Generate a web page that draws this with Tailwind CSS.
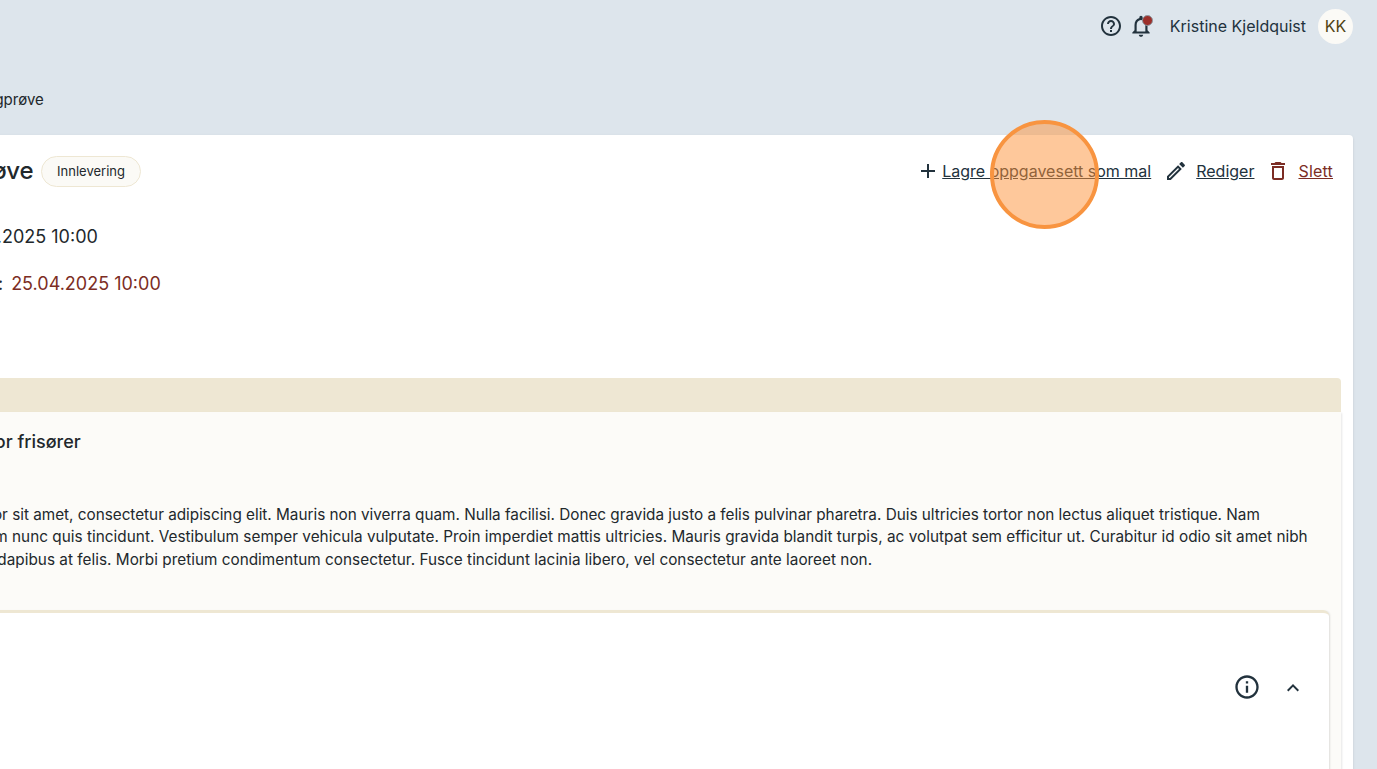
<!DOCTYPE html>
<html lang="nb">
<head>
    <meta charset="UTF-8">
    <meta name="viewport" content="width=device-width, initial-scale=1.0">
    <title>Øvingprøve</title>
    <script src="https://cdn.jsdelivr.net/npm/@tailwindcss/browser@4"></script>
</head>
<body class="relative h-[769px] overflow-hidden bg-[#dde5ec] font-['Inter',sans-serif] text-[#22282c]">
    <!-- page is scrolled sideways: the content starts left of the viewport -->
    <div class="ml-[-200px] h-[769px] w-[1577px] overflow-hidden pr-6">
        <header class="flex h-[52px] items-center justify-end">
            <svg class="h-6 w-6 fill-[#22323d]" viewBox="0 0 24 24"><path d="M11 18h2v-2h-2v2zm1-16C6.48 2 2 6.48 2 12s4.48 10 10 10 10-4.48 10-10S17.52 2 12 2zm0 18c-4.41 0-8-3.59-8-8s3.59-8 8-8 8 3.59 8 8-3.59 8-8 8zm0-14c-2.21 0-4 1.79-4 4h2c0-1.1.9-2 2-2s2 .9 2 2c0 2-3 1.75-3 5h2c0-2.25 3-2.5 3-5 0-2.21-1.79-4-4-4z"/></svg>
            <div class="relative ml-[5px] h-[26px] w-[26px]">
                <svg class="h-[26px] w-[26px] fill-[#22323d]" viewBox="0 0 24 24"><path d="M12 22c1.1 0 2-.9 2-2h-4c0 1.1.9 2 2 2zm6-6v-5c0-3.07-1.63-5.64-4.5-6.32V4c0-.83-.67-1.5-1.5-1.5s-1.5.67-1.5 1.5v.68C7.64 5.36 6 7.92 6 11v5l-2 2v1h16v-1l-2-2zm-2 1H8v-6c0-2.48 1.51-4.5 4-4.5s4 2.02 4 4.5v6z"/></svg>
                <span class="absolute right-[1px] top-[2px] h-[11px] w-[11px] rounded-full border border-[#8f99a1] bg-[#9c2f2a]"></span>
            </div>
            <span class="ml-[16px] text-base leading-6 text-[#22323d]">Kristine Kjeldquist</span>
            <span class="ml-3 flex h-[35px] w-[35px] items-center justify-center rounded-full bg-[#fbfaf6] text-base text-[#4f4213]">KK</span>
        </header>

        <nav class="mt-[36px] flex h-6 items-center justify-start pl-[162px] text-[15px] text-[#22282c]">Øvingprøve</nav>

        <main class="mt-[23px] h-[700px] rounded-t bg-white pl-5 pr-3 shadow-sm">
            <div class="flex items-start justify-between pl-[68px] pr-2 pt-5">
                <div class="flex items-center gap-[7px]">
                    <h1 class="text-2xl font-medium leading-8 text-[#22282c]">Øvingsprøve</h1>
                    <span class="rounded-full border border-[#eee7d3] bg-[#fbfaf6] px-[15.5px] py-[5px] text-[13px] leading-[19px] text-[#22282c]">Innlevering</span>
                </div>
                <div class="flex items-center pt-1 text-base leading-6">
                    <svg class="h-6 w-6 fill-[#22323d]" viewBox="0 0 24 24"><path d="M19 13h-6v6h-2v-6H5v-2h6V5h2v6h6v2z"/></svg>
                    <a class="ml-[2px] text-[#22323d] underline">Lagre oppgavesett som mal</a>
                    <svg class="ml-[13px] h-6 w-6 fill-[#22323d]" viewBox="0 0 24 24"><path d="M14.06 9.02l.92.92L5.92 19H5v-.92l9.06-9.06M17.66 3c-.25 0-.51.1-.7.29l-1.83 1.83 3.75 3.75 1.83-1.83c.39-.39.39-1.02 0-1.41l-2.34-2.34c-.2-.2-.45-.29-.71-.29zm-3.6 3.19L3 17.25V21h3.75L17.81 9.94l-3.75-3.75z"/></svg>
                    <a class="ml-2 text-[#22323d] underline">Rediger</a>
                    <svg class="ml-3 h-6 w-6 fill-[#7c2d24]" viewBox="0 0 24 24"><path d="M6 19c0 1.1.9 2 2 2h8c1.1 0 2-.9 2-2V7H6v12zM8 9h8v10H8V9zm7.5-5l-1-1h-5l-1 1H5v2h14V4z"/></svg>
                    <a class="ml-2 tracking-[0.2px] text-[#7c2d24] underline">Slett</a>
                </div>
            </div>

            <dl class="mt-[38px] text-lg leading-6">
                <div class="flex justify-start gap-[10px] pl-[41px]"><dt>Publisert:</dt><dd>01.04.2025 10:00</dd></div>
                <div class="mt-[23px] flex gap-2 pl-[41px]"><dt>Innleveringsfrist:</dt><dd class="text-[#7c2d24]">25.04.2025 10:00</dd></div>
            </dl>

            <section class="mt-[82px]">
                <div class="h-[34px] rounded-t bg-[#eee7d3]"></div>
                <div class="h-[400px] bg-[#fcfbf8] pl-4 pr-3 shadow-[2px_0_2px_-1px_rgba(0,0,0,0.1)]">
                    <h2 class="pl-[70px] pt-[18px] text-lg font-medium leading-6">Oppgave for frisører</h2>
                    <div class="mt-[49.5px] whitespace-nowrap pl-[37px] text-[15.3px] leading-[22.5px]">
                        <p class="tracking-[-0.01px]">Lorem ipsum dolor sit amet, consectetur adipiscing elit. Mauris non viverra quam. Nulla facilisi. Donec gravida justo a felis pulvinar pharetra. Duis ultricies tortor non lectus aliquet tristique. Nam</p>
                        <p class="tracking-[0.03px]">Integer fermentum nunc quis tincidunt. Vestibulum semper vehicula vulputate. Proin imperdiet mattis ultricies. Mauris gravida blandit turpis, ac volutpat sem efficitur ut. Curabitur id odio sit amet nibh</p>
                        <p class="tracking-[0.022px]">Aliquam egestas dapibus at felis. Morbi pretium condimentum consectetur. Fusce tincidunt lacinia libero, vel consectetur ante laoreet non.</p>
                    </div>
                    <div class="mt-[38.5px] h-[300px] rounded-t-md border-t-[3px] border-[#eee7d3] bg-white shadow-[2px_0_2px_-1px_rgba(0,0,0,0.12)]">
                        <div class="flex items-center justify-end pr-6 pt-[60px]">
                            <svg class="h-7 w-7 fill-[#22323d]" viewBox="0 0 24 24"><path d="M11 7h2v2h-2zm0 4h2v6h-2zm1-9C6.48 2 2 6.48 2 12s4.48 10 10 10 10-4.48 10-10S17.52 2 12 2zm0 18c-4.41 0-8-3.59-8-8s3.59-8 8-8 8 3.59 8 8-3.59 8-8 8z"/></svg>
                            <svg class="ml-5 mt-[2px] h-6 w-6 fill-[#22323d]" viewBox="0 0 24 24"><path d="M12 8l-6 6 1.41 1.41L12 10.83l4.59 4.58L18 14z"/></svg>
                        </div>
                    </div>
                </div>
            </section>
        </main>
    </div>

    <!-- click marker over the page -->
    <div class="absolute left-[990px] top-[120px] h-[109px] w-[109px] rounded-full border-[4px] border-[#f89440] bg-[#fd9137]/50"></div>
</body>
</html>
